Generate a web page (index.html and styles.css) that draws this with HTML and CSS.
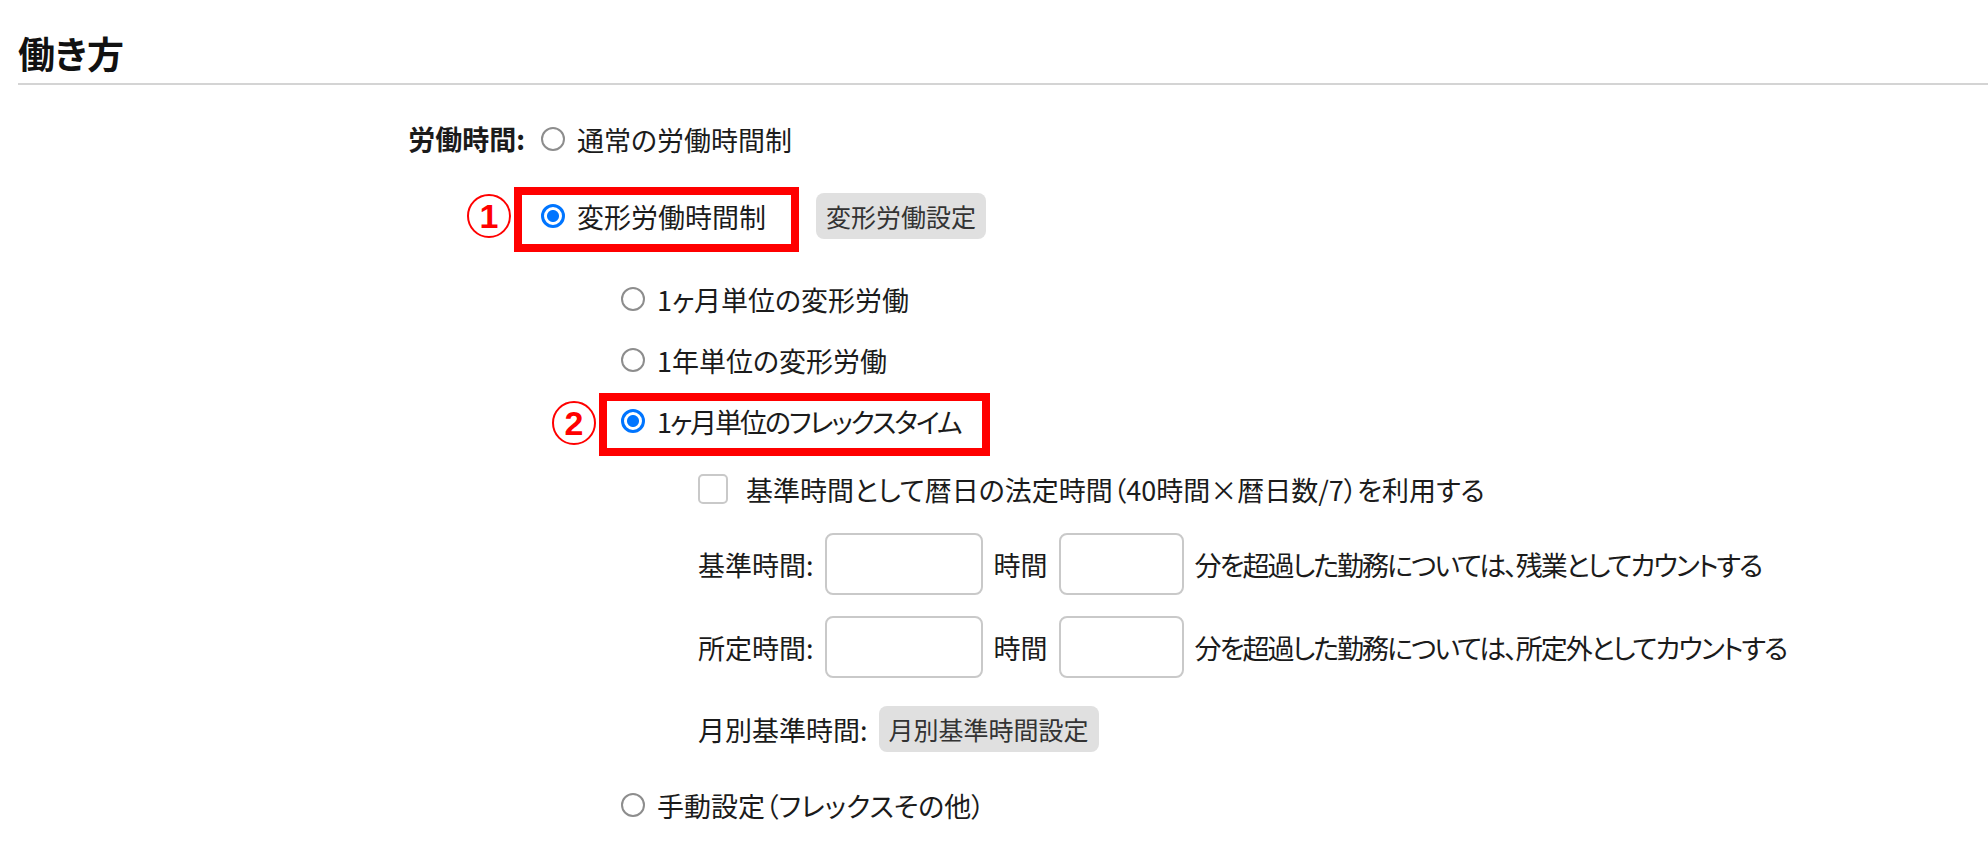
FILE: index.html
```html
<!DOCTYPE html>
<html lang="ja">
<head>
  <meta charset="UTF-8">
  <meta name="viewport" content="width=device-width, initial-scale=1.0">
  <title>働き方</title>
  <link rel="stylesheet" href="styles.css">
</head>
<body>
  <div class="page">
    <h2 class="section-title">働き方</h2>

    <div class="field">
      <div class="field-label">労働時間:</div>
      <div class="field-body">
        <label class="choice">
          <input type="radio" name="work-time" class="radio">
          <span>通常の労働時間制</span>
        </label>

        <div class="choice-row row-variable">
          <label class="choice marked mark-one">
            <span class="callout-num">1</span>
            <span class="callout-box"></span>
            <input type="radio" name="work-time" class="radio" checked>
            <span>変形労働時間制</span>
          </label>
          <button class="button">変形労働設定</button>
        </div>

        <div class="sub-options">
          <label class="choice">
            <input type="radio" name="variable-type" class="radio">
            <span>1ヶ月単位の変形労働</span>
          </label>
          <label class="choice">
            <input type="radio" name="variable-type" class="radio">
            <span>1年単位の変形労働</span>
          </label>
          <label class="choice marked mark-two">
            <span class="callout-num">2</span>
            <span class="callout-box"></span>
            <input type="radio" name="variable-type" class="radio" checked>
            <span class="tight">1ヶ月単位のフレックスタイム</span>
          </label>

          <div class="flex-detail">
            <label class="check-row">
              <input type="checkbox" class="checkbox">
              <span>基準時間として暦日の法定時間（40時間×暦日数/7）を利用する</span>
            </label>
            <div class="time-row">
              <span>基準時間:</span>
              <input type="text" class="time-input hours">
              <span>時間</span>
              <input type="text" class="time-input minutes">
              <span class="tight">分を超過した勤務については、残業としてカウントする</span>
            </div>
            <div class="time-row">
              <span>所定時間:</span>
              <input type="text" class="time-input hours">
              <span>時間</span>
              <input type="text" class="time-input minutes">
              <span class="tight">分を超過した勤務については、所定外としてカウントする</span>
            </div>
            <div class="button-row">
              <span>月別基準時間:</span>
              <button class="button">月別基準時間設定</button>
            </div>
          </div>

          <label class="choice">
            <input type="radio" name="variable-type" class="radio">
            <span>手動設定（フレックスその他）</span>
          </label>
        </div>
      </div>
    </div>
  </div>
</body>
</html>
```

FILE: styles.css
```css
:root {
  --text: #1b1b1b;
  --border: #c9c9c9;
  --accent: #0075ff;
  --callout: #ff0000;
}

body {
  margin: 0;
  background-color: #ffffff;
  color: var(--text);
  font-family: "Noto Sans CJK JP", "Noto Sans", sans-serif;
  font-size: 27px;
  font-feature-settings: "palt";
}

.page {
  padding: 33px 0 40px 18px;
}

.section-title {
  margin: 0;
  padding-bottom: 10px;
  border-bottom: 2px solid #d4d4d4;
  font-size: 37px;
  line-height: 40px;
  font-weight: 700;
  color: #111111;
}

.field {
  display: flex;
  align-items: flex-start;
  margin-top: 31px;
}

.field-label {
  width: 507px;
  padding-right: 16px;
  text-align: right;
  font-weight: 700;
  line-height: 46px;
}

.field-body {
  display: flex;
  flex-direction: column;
  align-items: flex-start;
}

.choice {
  display: flex;
  align-items: center;
  gap: 12px;
  height: 46px;
  cursor: pointer;
}

.choice-row {
  display: flex;
  align-items: center;
  gap: 50px;
}

.row-variable {
  margin-top: 31px;
}

.tight {
  letter-spacing: -2px;
}

.radio {
  appearance: none;
  width: 24px;
  height: 24px;
  margin: 0;
  flex-shrink: 0;
  border: 2px solid #8d8d8d;
  border-radius: 50%;
  background-color: #ffffff;
}

.radio:checked {
  border: 3px solid var(--accent);
  background: radial-gradient(circle, var(--accent) 0 5.5px, #ffffff 6.5px);
}

.button {
  height: 46px;
  padding: 0 10px;
  border: none;
  border-radius: 8px;
  background-color: #e0e0e0;
  color: #333333;
  font-family: inherit;
  font-size: 25px;
  font-feature-settings: "palt";
  cursor: pointer;
}

.sub-options {
  display: flex;
  flex-direction: column;
  align-items: flex-start;
  gap: 15px;
  margin-top: 37px;
  margin-left: 80px;
}

.flex-detail {
  display: flex;
  flex-direction: column;
  gap: 21px;
  margin: 7px 0 15px 77px;
}

.check-row {
  display: flex;
  align-items: center;
  gap: 18px;
  height: 46px;
}

.checkbox {
  appearance: none;
  width: 30px;
  height: 30px;
  margin: 0;
  border: 2px solid var(--border);
  border-radius: 5px;
  background-color: #ffffff;
}

.time-row,
.button-row {
  display: flex;
  align-items: center;
  gap: 11px;
}

.button-row {
  margin-top: 7px;
}

.time-input {
  height: 62px;
  box-sizing: border-box;
  border: 2px solid var(--border);
  border-radius: 8px;
  font-family: inherit;
  font-size: 25px;
}

.time-input.hours {
  width: 158px;
}

.time-input.minutes {
  width: 125px;
}

/* red callouts around the selected options */
.marked {
  position: relative;
}

.callout-box {
  position: absolute;
  top: -6px;
  bottom: -13px;
  left: -27px;
  right: -33px;
  border: 8px solid var(--callout);
  pointer-events: none;
}

.mark-two .callout-box {
  top: -5px;
  bottom: -12px;
  left: -22px;
  right: -30px;
}

.callout-num {
  position: absolute;
  top: 1px;
  left: -74px;
  width: 44px;
  height: 44px;
  box-sizing: border-box;
  border: 2px solid var(--callout);
  border-radius: 50%;
  color: var(--callout);
  font-family: "Liberation Sans", Arial, sans-serif;
  font-size: 34px;
  font-weight: 700;
  line-height: 40px;
  text-align: center;
}

.mark-two .callout-num {
  left: -69px;
  top: 3px;
}
```
